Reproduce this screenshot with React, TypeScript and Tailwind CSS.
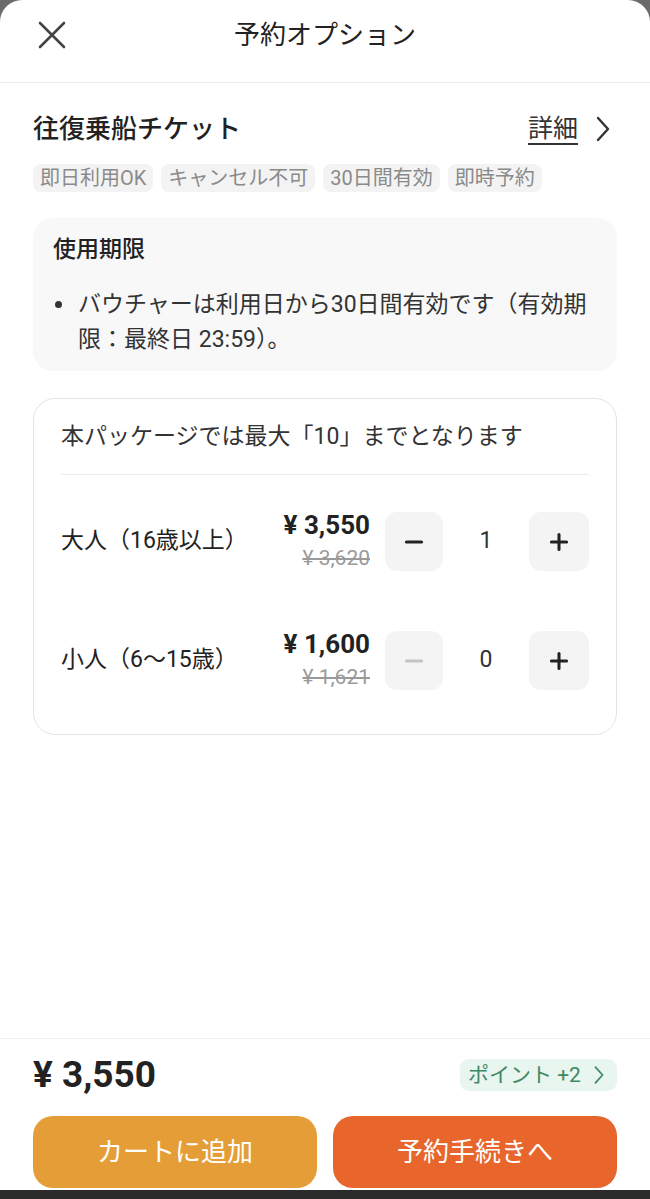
import { Minus, Plus } from 'lucide-react'

const TAGS = ['即日利用OK', 'キャンセル不可', '30日間有効', '即時予約']

const ROWS = [
  { label: '大人（16歳以上）', price: '¥ 3,550', old: '¥ 3,620', qty: 1 },
  { label: '小人（6〜15歳）', price: '¥ 1,600', old: '¥ 1,621', qty: 0 },
]

function Chevron({ className }: { className?: string }) {
  return (
    <svg viewBox="0 0 16 28" fill="none" stroke="currentColor" strokeWidth={2.4} strokeLinecap="round" strokeLinejoin="round" className={className}>
      <polyline points="3,3 13,14 3,25" />
    </svg>
  )
}

export default function App() {
  return (
    <div
      className="w-[650px] h-[1199px] bg-[#6b6b6b] overflow-hidden"
      style={{ fontFamily: 'Roboto, "Noto Sans CJK JP", sans-serif' }}
    >
      <div className="h-full flex flex-col bg-white rounded-t-[22px] text-[#222]">
        {/* Header */}
        <header className="h-[83px] shrink-0 flex items-center border-b border-[#ececec] px-[38px] pb-[12px]">
          <svg viewBox="0 0 28 28" className="w-[28px] h-[28px] text-[#444]" stroke="currentColor" strokeWidth={2.6} strokeLinecap="round">
            <line x1="2" y1="2" x2="26" y2="26" />
            <line x1="26" y1="2" x2="2" y2="26" />
          </svg>
          <h1 className="flex-1 text-center text-[26px] leading-[36px] mr-[28px]">予約オプション</h1>
        </header>

        <main className="flex-1 px-[33px]">
          <div className="flex items-center justify-between mt-[28px] h-[36px]">
            <h2 className="text-[26px] font-medium leading-[36px]">往復乗船チケット</h2>
            <div className="flex items-center gap-[17px]">
              <span className="text-[25px] leading-[36px] underline underline-offset-[6px] decoration-[1.5px] text-[#333]">詳細</span>
              <Chevron className="w-[16px] h-[28px] mr-[6px] text-[#333]" />
            </div>
          </div>

          <div className="flex gap-[8px] mt-[17px]">
            {TAGS.map((t) => (
              <span key={t} className="bg-[#f3f3f3] text-[#8a8a8a] text-[20px] leading-[28px] px-[7px] rounded-[8px]">
                {t}
              </span>
            ))}
          </div>

          {/* Usage period */}
          <section className="mt-[26px] bg-[#f8f8f8] rounded-[20px] pl-[20px] pr-[14px] pt-[16px] pb-[14px]">
            <h3 className="text-[23px] font-medium leading-[32px]">使用期限</h3>
            <div className="flex mt-[21px] text-[23px] leading-[35px] text-[#333]">
              <span className="w-[25px] shrink-0 pt-[14px] pl-[2px]">
                <span className="block w-[7px] h-[7px] rounded-full bg-[#333]" />
              </span>
              <p>バウチャーは利用日から30日間有効です（有効期限：最終日 23:59）。</p>
            </div>
          </section>

          {/* Quantity card */}
          <section className="mt-[27px] border border-[#e3e3e3] rounded-[22px] px-[27px] pt-[22px] pb-[44px]">
            <p className="text-[23px] leading-[32px] text-[#333]">本パッケージでは最大「10」までとなります</p>
            <div className="h-px bg-[#ececec] mt-[21px]" />
            <div className="flex flex-col gap-[60px] mt-[37px]">
              {ROWS.map((r) => (
                <div key={r.label} className="flex items-center h-[59px]">
                  <span className="flex-1 text-[23px] text-[#222]">{r.label}</span>
                  <div className="flex flex-col items-end mr-[15px]">
                    <span className="text-[26px] font-bold leading-[30px]">{r.price}</span>
                    <span className="text-[21px] text-[#9a9a9a] line-through leading-[30px] mt-[3px]">{r.old}</span>
                  </div>
                  <button className="w-[58px] h-[59px] rounded-[12px] bg-[#f4f4f4] flex items-center justify-center">
                    <Minus
                      className={r.qty > 0 ? 'w-[26px] h-[26px] text-[#222]' : 'w-[26px] h-[26px] text-[#c4c4c4]'}
                      strokeWidth={2.8}
                    />
                  </button>
                  <span className="w-[86px] text-center text-[23px] text-[#333]">{r.qty}</span>
                  <button className="w-[60px] h-[59px] rounded-[12px] bg-[#f4f4f4] flex items-center justify-center">
                    <Plus className="w-[26px] h-[26px] text-[#222]" strokeWidth={2.8} />
                  </button>
                </div>
              ))}
            </div>
          </section>
        </main>

        {/* Footer */}
        <footer className="shrink-0 border-t border-[#efefef] px-[33px] pt-[14px]">
          <div className="flex items-center justify-between h-[44px]">
            <span className="text-[37px] font-bold leading-[44px]">¥ 3,550</span>
            <span className="w-[157px] h-[32px] flex items-center justify-between bg-[#e9f5ef] text-[#3d8a63] text-[21px] leading-[32px] pl-[8px] pr-[12px] rounded-[9px]">
              ポイント +2
              <Chevron className="w-[12px] h-[20px]" />
            </span>
          </div>
          <div className="flex gap-[16px] mt-[19px] mb-[2px]">
            <button className="flex-1 h-[72px] rounded-[20px] bg-[#e59e37] text-white text-[26px]">カートに追加</button>
            <button className="flex-1 h-[72px] rounded-[20px] bg-[#e8662b] text-white text-[26px]">予約手続きへ</button>
          </div>
        </footer>
        <div className="h-[9px] shrink-0 bg-[#2b2b2b]" />
      </div>
    </div>
  )
}
